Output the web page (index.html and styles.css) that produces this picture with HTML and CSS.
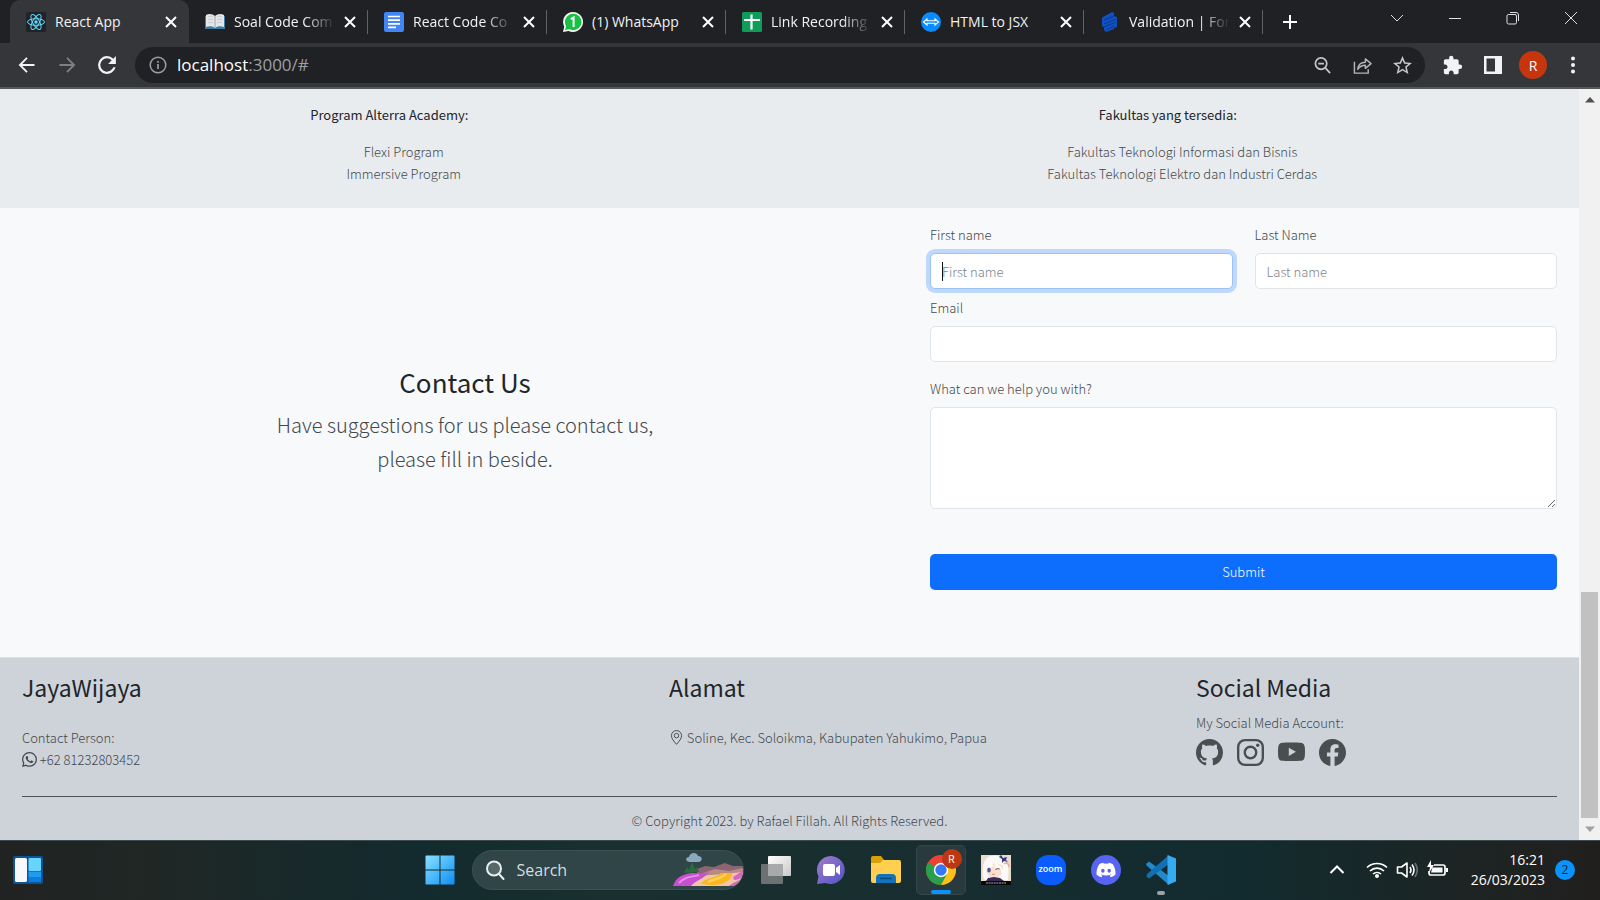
FILE: index.html
```html
<!DOCTYPE html>
<html lang="id">
<head>
<meta charset="utf-8">
<title>React App</title>
<link rel="stylesheet" href="styles.css">
</head>
<body>
<header class="tabstrip">
  <nav class="tabs" aria-label="Tabs">
    <div class="tab tab-active">
      <svg class="favicon" viewBox="0 0 20 20"><rect width="20" height="20" rx="1" fill="#20232a"/><g fill="none" stroke="#61dafb" stroke-width="1"><ellipse cx="10" cy="10" rx="8.5" ry="3.3"/><ellipse cx="10" cy="10" rx="8.5" ry="3.3" transform="rotate(60 10 10)"/><ellipse cx="10" cy="10" rx="8.5" ry="3.3" transform="rotate(120 10 10)"/></g><circle cx="10" cy="10" r="1.7" fill="#61dafb"/></svg>
      <a class="tab-title" href="#">React App</a>
      <button class="tab-close" aria-label="Close tab"><svg viewBox="0 0 12 12"><path d="M1 1l10 10M11 1L1 11"/></svg></button>
    </div>
    <div class="tab">
      <svg class="favicon" viewBox="0 0 20 20"><path d="M0 4h20v13H0z" fill="#3f7ca6"/><path d="M1 3c3-2 7-1 9 1 2-2 6-3 9-1v12c-3-1-7-1-9 1-2-2-6-2-9-1z" fill="#e4e6e8"/><path d="M10 4v12" stroke="#9aa5ad"/><path d="M3 5c2-1 4-1 5 0M3 8c2-1 4-1 5 0M3 11c2-1 4-1 5 0M12 5c2-1 4-1 5 0M12 8c2-1 4-1 5 0M12 11c2-1 4-1 5 0" fill="none" stroke="#c3c9ce"/></svg>
      <a class="tab-title tab-fade" href="#">Soal Code Com</a>
      <button class="tab-close" aria-label="Close tab"><svg viewBox="0 0 12 12"><path d="M1 1l10 10M11 1L1 11"/></svg></button>
    </div>
    <div class="tab">
      <svg class="favicon" viewBox="0 0 20 20"><rect width="20" height="20" rx="2" fill="#4285f4"/><path d="M4 4.5h12M4 8.2h12M4 11.8h12M4 15.4h8" stroke="#fff" stroke-width="1.7"/></svg>
      <a class="tab-title tab-fade" href="#">React Code Co</a>
      <button class="tab-close" aria-label="Close tab"><svg viewBox="0 0 12 12"><path d="M1 1l10 10M11 1L1 11"/></svg></button>
    </div>
    <div class="tab">
      <svg class="favicon" viewBox="0 0 20 20"><path d="M10 0a10 10 0 1 1-4.500 18.900L0 20l1.200-5.300A10 10 0 0 1 10 0z" fill="#f4f4f4"/><circle cx="10.200" cy="10" r="8.300" fill="#16c144"/><path d="M2 18l1.500-5 3.500 4z" fill="#16c144"/><path d="M7.800 7.200l2.800-1.700V15" fill="none" stroke="#fff" stroke-width="2"/></svg>
      <a class="tab-title" href="#">(1) WhatsApp</a>
      <button class="tab-close" aria-label="Close tab"><svg viewBox="0 0 12 12"><path d="M1 1l10 10M11 1L1 11"/></svg></button>
    </div>
    <div class="tab">
      <svg class="favicon" viewBox="0 0 20 20"><rect width="20" height="20" rx="1.500" fill="#0f9d58"/><path d="M2 8h16M9.500 2.500v15" stroke="#fff" stroke-width="2.200"/></svg>
      <a class="tab-title tab-fade" href="#">Link Recording</a>
      <button class="tab-close" aria-label="Close tab"><svg viewBox="0 0 12 12"><path d="M1 1l10 10M11 1L1 11"/></svg></button>
    </div>
    <div class="tab">
      <svg class="favicon" viewBox="0 0 20 20"><circle cx="10" cy="10" r="10" fill="#0a8bff"/><path d="M2.500 10l3.500-3v1.800h8V7l3.500 3-3.500 3v-1.800H6V13z" fill="none" stroke="#fff" stroke-width="1.100"/></svg>
      <a class="tab-title" href="#">HTML to JSX</a>
      <button class="tab-close" aria-label="Close tab"><svg viewBox="0 0 12 12"><path d="M1 1l10 10M11 1L1 11"/></svg></button>
    </div>
    <div class="tab">
      <svg class="favicon" viewBox="0 0 20 20"><path d="M3 5l9-5 2 1v3l3 1v10l-3 1v1l-8 3-2-2v-3l-2-1V6z" fill="#1050c0"/><path d="M4 8l10-4M4 12l12-5M4 15l12-5M6 18l8-4" stroke="#083a94"/></svg>
      <a class="tab-title tab-fade" href="#">Validation | For</a>
      <button class="tab-close" aria-label="Close tab"><svg viewBox="0 0 12 12"><path d="M1 1l10 10M11 1L1 11"/></svg></button>
    </div>
    <button class="new-tab" aria-label="New tab"><svg viewBox="0 0 16 16"><path d="M8 1v14M1 8h14"/></svg></button>
  </nav>
  <div class="window-controls">
    <button aria-label="Search tabs"><svg viewBox="0 0 14 14"><path d="M1 4l6 6 6-6"/></svg></button>
    <button aria-label="Minimize"><svg viewBox="0 0 14 14"><path d="M1 7.500h12"/></svg></button>
    <button aria-label="Restore"><svg viewBox="0 0 14 14"><rect x="1" y="3.500" width="9.500" height="9.500" rx="1.500"/><path d="M4 1.500h6a2.500 2.500 0 0 1 2.500 2.500v6"/></svg></button>
    <button aria-label="Close"><svg viewBox="0 0 14 14"><path d="M1 1l12 12M13 1L1 13"/></svg></button>
  </div>
</header>

<div class="toolbar">
  <button class="tool" aria-label="Back"><svg viewBox="0 0 24 24"><path d="M21 12H4M12 3.500L3.500 12l8.500 8.500" fill="none" stroke="#f1f3f4" stroke-width="2.200"/></svg></button>
  <button class="tool" aria-label="Forward"><svg viewBox="0 0 24 24"><path d="M3 12h17M12 3.500l8.500 8.500-8.500 8.500" fill="none" stroke="#7d7f82" stroke-width="2.200"/></svg></button>
  <button class="tool tool-reload" aria-label="Reload"><svg viewBox="3 3 18 18"><path fill="#f1f3f4" d="M17.650 6.350A7.960 7.960 0 0 0 12 4a8 8 0 1 0 7.730 10h-2.080A6 6 0 1 1 12 6c1.660 0 3.140.690 4.220 1.780L13 11h7V4l-2.350 2.350z"/></svg></button>
  <div class="omnibox">
    <svg class="omni-icon" viewBox="0 0 18 18"><circle cx="9" cy="9" r="7.800" fill="none" stroke="#9aa0a6" stroke-width="1.500"/><path d="M9 8v5M9 5v1.700" stroke="#9aa0a6" stroke-width="1.700"/></svg>
    <span class="url"><b>localhost</b>:3000/#</span>
    <button class="omni-btn" aria-label="Zoom out"><svg viewBox="0 0 20 20"><g fill="none" stroke="#c4c7ca" stroke-width="1.800"><circle cx="8.500" cy="8" r="6"/><path d="M13 12.500l5 5.500M5.500 8h6"/></g></svg></button>
    <button class="omni-btn" aria-label="Share"><svg viewBox="0 0 20 20"><g fill="none" stroke="#b4b7ba" stroke-width="1.500"><path d="M1.500 6v12H16v-4"/><path d="M5 14c.5-5 3-7.500 8-7.500V3l6 5-6 5V9.800c-4 0-6 1.500-8 4.200z" stroke-linejoin="round"/></g></svg></button>
    <button class="omni-btn" aria-label="Bookmark"><svg viewBox="2 2 20 20"><path fill="#c4c7ca" d="M22 9.240l-7.190-.620L12 2 9.190 8.630 2 9.240l5.460 4.730L5.820 21 12 17.270 18.180 21l-1.630-7.030L22 9.240zM12 15.400l-3.760 2.270 1-4.280-3.320-2.880 4.380-.380L12 6.100l1.710 4.040 4.380.380-3.320 2.880 1 4.280L12 15.400z"/></svg></button>
  </div>
  <div class="tool-right">
    <button aria-label="Extensions"><svg viewBox="1 0 23 23"><path fill="#f1f3f4" d="M20.500 11H19V7c0-1.100-.9-2-2-2h-4V3.500a2.500 2.500 0 0 0-5 0V5H4c-1.100 0-1.990.9-1.990 2v3.800H3.500c1.490 0 2.700 1.210 2.700 2.700s-1.210 2.700-2.700 2.700H2V20c0 1.100.9 2 2 2h3.800v-1.500c0-1.490 1.210-2.700 2.700-2.700s2.700 1.210 2.700 2.700V22H17c1.100 0 2-.9 2-2v-4h1.500a2.500 2.500 0 0 0 0-5z"/></svg></button>
    <button aria-label="Side panel"><svg viewBox="0 0 20 20"><path fill="#f1f3f4" fill-rule="evenodd" d="M1 1h18v18H1zM3.500 3.500v13H12v-13z"/></svg></button>
    <button class="avatar" aria-label="Profile">R</button>
    <button aria-label="Menu"><svg viewBox="0 0 20 20" fill="#f1f3f4"><circle cx="10" cy="3.500" r="2"/><circle cx="10" cy="10" r="2"/><circle cx="10" cy="16.500" r="2"/></svg></button>
  </div>
</div>

<div class="viewport">
  <main class="page">
    <section class="programs">
      <div class="program-col">
        <h2>Program Alterra Academy:</h2>
        <ul><li>Flexi Program</li><li>Immersive Program</li></ul>
      </div>
      <div class="program-col">
        <h2>Fakultas yang tersedia:</h2>
        <ul><li>Fakultas Teknologi Informasi dan Bisnis</li><li>Fakultas Teknologi Elektro dan Industri Cerdas</li></ul>
      </div>
    </section>

    <section class="contact">
      <div class="contact-intro">
        <h1>Contact Us</h1>
        <p>Have suggestions for us please contact us,<br>please fill in beside.</p>
      </div>
      <form class="contact-form">
        <div class="name-row">
          <div class="field">
            <label for="first">First name</label>
            <div class="input-wrap"><input class="control control-focus" id="first" type="text" placeholder="First name"><span class="caret"></span></div>
          </div>
          <div class="field">
            <label for="last">Last Name</label>
            <input class="control" id="last" type="text" placeholder="Last name">
          </div>
        </div>
        <div class="field field-email">
          <label for="email">Email</label>
          <input class="control" id="email" type="email">
        </div>
        <div class="field field-message">
          <label for="message">What can we help you with?</label>
          <textarea class="control" id="message"></textarea>
        </div>
        <button class="submit" type="submit">Submit</button>
      </form>
    </section>

    <footer class="footer">
      <div class="footer-cols">
        <div class="footer-col">
          <h3>JayaWijaya</h3>
          <p class="footer-text">Contact Person:<br><svg class="bi" viewBox="0 0 16 16"><path d="M13.601 2.326A7.850 7.850 0 0 0 7.994 0C3.627 0 .068 3.558.064 7.926c0 1.399.366 2.760 1.057 3.965L0 16l4.204-1.102a7.900 7.900 0 0 0 3.790.965h.004c4.368 0 7.926-3.558 7.930-7.930A7.900 7.900 0 0 0 13.600 2.326zM7.994 14.521a6.600 6.600 0 0 1-3.356-.920l-.240-.144-2.494.654.666-2.433-.156-.251a6.560 6.560 0 0 1-1.007-3.505c0-3.626 2.957-6.584 6.591-6.584a6.560 6.560 0 0 1 4.660 1.931 6.560 6.560 0 0 1 1.928 4.660c-.004 3.639-2.961 6.592-6.592 6.592m3.615-4.934c-.197-.099-1.170-.578-1.353-.646-.182-.065-.315-.099-.445.099-.133.197-.513.646-.627.775-.114.133-.232.148-.430.050-.197-.100-.836-.308-1.592-.985-.590-.525-.985-1.175-1.103-1.372-.114-.198-.011-.304.088-.403.087-.088.197-.232.296-.346.100-.114.133-.198.198-.330.065-.134.034-.248-.015-.347-.050-.099-.445-1.076-.612-1.470-.160-.389-.323-.335-.445-.340-.114-.007-.247-.007-.380-.007a.730.730 0 0 0-.529.247c-.182.198-.691.677-.691 1.654s.710 1.916.810 2.049c.098.133 1.394 2.132 3.383 2.992.470.205.840.326 1.129.418.475.152.904.129 1.246.080.380-.058 1.171-.480 1.338-.943.164-.464.164-.860.114-.992-.049-.133-.182-.198-.380-.297z"/></svg> +62 81232803452</p>
        </div>
        <div class="footer-col">
          <h3>Alamat</h3>
          <p class="footer-text"><svg class="bi" viewBox="0 0 16 16"><path d="M8 15.300C5 12 2.600 9 2.600 6a5.400 5.400 0 0 1 10.800 0c0 3-2.400 6-5.400 9.300z" fill="none" stroke="currentColor"/><circle cx="8" cy="6" r="2.400" fill="none" stroke="currentColor"/></svg> Soline, Kec. Soloikma, Kabupaten Yahukimo, Papua</p>
        </div>
        <div class="footer-col">
          <h3>Social Media</h3>
          <p class="footer-lead">My Social Media Account:</p>
          <div class="social">
            <a href="#" aria-label="GitHub"><svg viewBox="0 0 16 16"><path d="M8 0C3.580 0 0 3.580 0 8c0 3.540 2.290 6.530 5.470 7.590.400.070.550-.170.550-.380 0-.190-.010-.820-.010-1.490-2.010.370-2.530-.490-2.690-.940-.090-.230-.480-.940-.820-1.130-.280-.150-.680-.520-.010-.530.630-.010 1.080.580 1.230.820.720 1.210 1.870.870 2.330.660.070-.520.280-.870.510-1.070-1.780-.200-3.640-.890-3.640-3.950 0-.870.310-1.590.820-2.150-.080-.200-.360-1.020.080-2.120 0 0 .670-.210 2.200.820.640-.180 1.320-.270 2-.270s1.360.090 2 .270c1.530-1.040 2.200-.820 2.200-.820.440 1.100.160 1.920.080 2.120.510.560.820 1.270.820 2.150 0 3.070-1.870 3.750-3.650 3.950.290.250.540.730.540 1.480 0 1.070-.010 1.930-.010 2.200 0 .210.150.460.550.380A8.010 8.010 0 0 0 16 8c0-4.420-3.580-8-8-8"/></svg></a>
            <a href="#" aria-label="Instagram"><svg viewBox="0 0 16 16"><rect x=".7" y=".7" width="14.600" height="14.600" rx="4" fill="none" stroke="currentColor" stroke-width="1.400"/><circle cx="8" cy="8" r="3.400" fill="none" stroke="currentColor" stroke-width="1.400"/><circle cx="12.300" cy="3.700" r="1"/></svg></a>
            <a href="#" aria-label="YouTube"><svg viewBox="0 0 16 16"><path fill-rule="evenodd" d="M2.500 2.200C4 2 12 2 13.500 2.200 15.200 2.400 15.700 3.400 15.900 5c.15 1.800.15 3.300 0 5-.2 1.800-.7 2.700-2.400 2.900-1.500.2-9.500.2-11 0C.8 12.700.3 11.800.1 10c-.15-1.700-.15-3.200 0-5C.3 3.400.8 2.400 2.500 2.200zM6.400 5.200v4.800l4.200-2.400z"/></svg></a>
            <a href="#" aria-label="Facebook"><svg viewBox="0 0 16 16"><path d="M16 8.049c0-4.446-3.582-8.050-8-8.050C3.580 0-.002 3.603-.002 8.050c0 4.017 2.926 7.347 6.750 7.951v-5.625h-2.030V8.050H6.750V6.275c0-2.017 1.195-3.131 3.022-3.131.876 0 1.791.157 1.791.157v1.980h-1.009c-.993 0-1.303.621-1.303 1.258v1.510h2.218l-.354 2.326H9.250V16c3.824-.604 6.750-3.934 6.750-7.951"/></svg></a>
          </div>
        </div>
      </div>
      <p class="copyright">© Copyright 2023. by Rafael Fillah. All Rights Reserved.</p>
    </footer>
  </main>
  <div class="scrollbar">
    <svg class="scroll-arrow" viewBox="0 0 10 6"><path d="M0 5.500L5 0l5 5.500z" fill="#505050"/></svg>
    <div class="scroll-track"><div class="scroll-thumb"></div></div>
    <svg class="scroll-arrow" viewBox="0 0 10 6"><path d="M0 .5L5 6l5-5.500z" fill="#a0a0a0"/></svg>
  </div>
</div>

<div class="taskbar">
  <button class="widgets" aria-label="Widgets"><svg viewBox="0 0 30 28"><rect width="30" height="28" rx="2" fill="#0c5496"/><rect x="2" y="2" width="12" height="24" rx="1.500" fill="#f7f8fc"/><rect x="15.500" y="2" width="12.500" height="13" rx="1" fill="#67d4fb"/><path d="M15.500 15.500H28V21H15.500z" fill="#1f9bf0"/><path d="M15.500 21H28v5H15.500z" fill="#0a7de0"/></svg></button>
  <div class="apps">
    <button class="app" aria-label="Start"><svg viewBox="0 0 30 30"><defs><linearGradient id="win" gradientUnits="userSpaceOnUse" x1="0" y1="0" x2="30" y2="30"><stop stop-color="#8be3ff"/><stop offset="1" stop-color="#0a8df5"/></linearGradient></defs><path fill="url(#win)" d="M1 .5h13.500v14H.5V1zM15.500.5H29l.5.5v13.500h-14zM.5 15.500h14v14H1l-.5-.5zM15.500 15.500h14V29l-.5.5H15.500z"/></svg></button>
    <button class="search">
      <svg class="search-icon" viewBox="0 0 20 20"><g fill="none" stroke="#e8eeee" stroke-width="2" stroke-linecap="round"><circle cx="9" cy="8.500" r="7" fill="#56676a"/><path d="M14 14l4.500 5"/></g></svg>
      <span>Search</span>
      <svg class="search-art" viewBox="0 0 70 34"><path d="M24 16l8-3 9 1 11-4 8 3h10v12H24z" fill="#8d6572"/><path d="M30 20l12-4 14 2 14-3v14H30z" fill="#b78a86"/><path d="M14 33c4-6 14-11 24-11l14-1 18-2v6c-3 5-8 8-12 8z" fill="#efc7a4"/><path d="M0 33c3-9 10-12 19-13 6 0 11 1 17-1-5 7-13 8-18 14z" fill="#c84fd0"/><path d="M6 30c5-6 12-6 20-8" fill="none" stroke="#e58be8" stroke-width="2"/><path d="M28 31c4-7 14-5 20-11l11 0c1 6-8 12-20 12z" fill="#ffb51c"/><path d="M35 29c6-3 13-3 18-8" fill="none" stroke="#ffd667" stroke-width="2"/><path d="M60 24c3-2 6-4 10-6v6c-3 2-6 3-9 3zM56 33c4-4 8-4 12-7-1 4-5 7-9 7z" fill="#d765c8"/><path d="M11 20l3-6 2 3 3-8 3 7 2-2 2 5z" fill="#2d6a40"/><path d="M17 9c-5 0-5-5-1-5 1-5 8-5 9-1 5 0 5 6 0 6z" fill="#8ba9bd"/></svg>
    </button>
    <button class="app" aria-label="Task view"><svg viewBox="0 0 30 30"><defs><linearGradient id="tv" x2="1" y2="1"><stop stop-color="#fff"/><stop offset="1" stop-color="#c8c8c8"/></linearGradient></defs><rect x="7" y="1" width="23" height="20" rx="1" fill="url(#tv)"/><rect y="9" width="22" height="20" rx="1" fill="#6c7172"/><path d="M7 9h15v12H7z" fill="#a7a9aa"/></svg></button>
    <button class="app" aria-label="Chat"><svg viewBox="0 0 30 30"><defs><linearGradient id="ch" x2="1" y2="1"><stop stop-color="#a37cc9"/><stop offset="1" stop-color="#5053c6"/></linearGradient></defs><path d="M15 1a14 14 0 1 1-5.500 27L1 29l1.500-7.500A14 14 0 0 1 15 1z" fill="url(#ch)"/><rect x="7" y="9" width="12" height="12" rx="2" fill="#fff"/><path d="M20 13l4-3v10l-4-3z" fill="#fff"/></svg></button>
    <button class="app" aria-label="File Explorer"><svg viewBox="0 0 30 30"><path d="M0 3q0-2 2-2h8l3 4-3 4H0z" fill="#d9a009"/><path d="M0 8h9l3-3h16q2 0 2 2v19q0 2-2 2H2q-2 0-2-2z" fill="#ffd04f"/><path d="M5 28v-5q0-4 4-4h12q4 0 4 4v5z" fill="#0f74bd"/><path d="M9 23.500h12" stroke="#074c7c" stroke-width="1.500"/></svg></button>
    <button class="app app-active" aria-label="Chrome"><svg viewBox="0 0 30 30"><circle cx="15" cy="15" r="15" fill="#ea4335"/><path d="M15 15L2 7.500A15 15 0 0 0 15 30l6.500-11z" fill="#28a04b"/><path d="M15 8h13.300A15 15 0 0 1 15 30l6-11z" fill="#fbc116"/><circle cx="15" cy="15" r="7.200" fill="#fff"/><circle cx="15" cy="15" r="5.700" fill="#3478f6"/></svg><span class="app-badge">R</span></button>
    <button class="app" aria-label="Genshin Impact"><svg viewBox="0 0 30 30"><path fill="#e9dccb" d="M0 0h30v30H0z"/><path d="M2 14C2 3 9-1 17 1c9 2 12 9 10 24H4C1 22 2 18 2 14z" fill="#fbf9f7"/><path d="M5 12c4-4 13-5 17-1v6c-2 5-8 6-10 6-4 0-7-4-7-11z" fill="#fadfce"/><path d="M3 15c3-2 4-6 8-9-1 3 1 5 4 6l-1-4c4 1 7 4 8 8l2-3c2 5 0 9-2 12-1-3-1-9-3-12-2 1-5 0-7-2-3 2-6 4-9 4z" fill="#fff"/><ellipse cx="8" cy="15" rx="1.800" ry="2.600" fill="#4a5896"/><path d="M14.500 14.500q2-1.500 4-.5" stroke="#614b58" fill="none"/><path d="M11 19q1.500 1 3 0" stroke="#c0706c" fill="none" stroke-width=".8"/><path d="M20 0l2 3 4-1-1 3 2 2-4-1-2 2v-4l-3-2z" fill="#343a85"/><path d="M7 23l6-1 6 1 4 3H5z" fill="#3a2c5a"/><path d="M23 9c2-2 5-1 5 3" fill="none" stroke="#dfaea0" stroke-width="1.500"/><path d="M0 26h30v4H0z" fill="#080808"/><path d="M5 28h20" stroke="#aaa" stroke-width="1.200" stroke-dasharray="2 .6"/></svg></button>
    <button class="app app-zoom" aria-label="Zoom"><span>zoom</span></button>
    <button class="app" aria-label="Discord"><svg viewBox="0 0 30 30"><circle cx="15" cy="15" r="15" fill="#5865f2"/><g transform="translate(5.500 5.500) scale(1.190)"><path fill="#fff" d="M13.545 2.907a13.200 13.200 0 0 0-3.257-1.011.050.050 0 0 0-.052.025c-.141.250-.297.577-.406.833a12.200 12.200 0 0 0-3.658 0 8 8 0 0 0-.412-.833.050.050 0 0 0-.052-.025c-1.125.194-2.220.534-3.257 1.011C.356 6.024-.213 9.047.066 12.032a13.300 13.300 0 0 0 4.016 2.057q.500-.650.874-1.348a9 9 0 0 1-1.276-.665l.263-.280c2.670 1.203 5.505 1.203 8.092 0l.300.202a8 8 0 0 1-1.279.685q.370.720.850 1.399a13.200 13.200 0 0 0 4.022-2.057c.334-3.451-.559-6.449-2.383-9.118m-8.198 7.307c-.789 0-1.438-.724-1.438-1.612s.637-1.613 1.438-1.613c.807 0 1.450.730 1.438 1.613 0 .888-.637 1.612-1.438 1.612m5.316 0c-.788 0-1.438-.724-1.438-1.612s.637-1.613 1.438-1.613c.807 0 1.451.730 1.438 1.613 0 .888-.631 1.612-1.438 1.612"/></g></svg></button>
    <button class="app app-running" aria-label="Visual Studio Code"><svg viewBox="0 0 30 30"><path d="M0 9l3-2.500L23 21v9L1 11z" fill="#2489ca"/><path d="M1 19L23 0v9L3 23.500.5 21.500z" fill="#1070b3"/><path d="M21.500 0L30 3.500v23L21.500 30z" fill="#35abf1"/></svg></button>
  </div>
  <div class="tray">
    <button aria-label="Show hidden icons"><svg viewBox="0 0 22 22"><path d="M4.500 14l6.500-6.500 6.500 6.500" fill="none" stroke="#fff" stroke-width="2"/></svg></button>
    <button class="tray-status" aria-label="Network, volume and battery">
      <svg viewBox="0 0 22 22"><g fill="none" stroke="#fff" stroke-width="1.600"><path d="M1 8.500a14.500 14.500 0 0 1 20 0M4 12a10 10 0 0 1 14 0M7 15a6 6 0 0 1 8 0"/></g><circle cx="11" cy="17" r="2" fill="#fff"/></svg>
      <svg viewBox="0 0 22 22"><g fill="none" stroke="#fff" stroke-width="1.600" stroke-linejoin="round"><path d="M1.500 8h4L11 4v14l-5.500-4h-4zM14 8q2 3 0 6M16 5.500q4 5.500 0 11"/><path d="M19 4q4.500 7 0 14" stroke="#657073"/></g></svg>
      <svg viewBox="0 0 22 22"><path d="M8 6h9q2 0 2 2v6q0 2-2 2H5q-2 0-2-2v-2" fill="none" stroke="#fff" stroke-width="1.700"/><path d="M6.500 8.500h10v5H5zM20 9h2v4h-2zM5 1L1 8h3l-1 6 5-8H5z" fill="#fff"/></svg>
    </button>
    <button class="clock"><span>16:21</span><span>26/03/2023</span></button>
    <button class="notice" aria-label="Notifications">2</button>
  </div>
</div>
</body>
</html>
```

FILE: styles.css
```css
* { box-sizing: border-box; }

body {
  margin: 0;
  height: 100vh;
  display: flex;
  flex-direction: column;
  overflow: hidden;
  font-family: "Open Sans", "Noto Sans", sans-serif;
}

button {
  padding: 0;
  border: 0;
  background: none;
  color: inherit;
  font: inherit;
}

svg { display: block; }

/* Tab strip */
.tabstrip {
  display: flex;
  justify-content: space-between;
  height: 43px;
  flex: none;
  background: #202124;
  color: #f1f3f4;
}
.tabs {
  display: flex;
  align-items: center;
  flex: 0 1 1317px;
  min-width: 0;
  padding-left: 10px;
}
.tab {
  display: flex;
  align-items: center;
  flex: 1 1 179px;
  min-width: 0;
  height: 43px;
  gap: 9px;
  padding: 0 12px 0 16px;
  background: linear-gradient(#5f6368, #5f6368) right center / 1px 24px no-repeat;
}
.tab-active {
  background: #35363a;
  border-radius: 10px 10px 0 0;
}
.favicon { flex: none; width: 20px; height: 20px; }
.tab-title {
  flex: 1;
  min-width: 0;
  overflow: hidden;
  white-space: nowrap;
  color: inherit;
  text-decoration: none;
  font-size: 14px;
  line-height: 20px;
}
.tab-fade {
  -webkit-mask-image: linear-gradient(90deg, #000 70%, transparent);
  mask-image: linear-gradient(90deg, #000 70%, transparent);
}
.tab-close {
  display: grid;
  place-items: center;
  flex: none;
  width: 12px;
  height: 20px;
}
.tab-close svg { width: 12px; height: 12px; }
.tab-close path { stroke: #fff; stroke-width: 2; }
.new-tab {
  display: grid;
  place-items: center;
  flex: none;
  width: 54px;
  height: 43px;
}
.new-tab svg { width: 16px; height: 16px; stroke: #fff; stroke-width: 2; }
.window-controls { display: flex; flex: none; height: 36px; }
.window-controls button {
  display: grid;
  place-items: center;
  width: 58px;
}
.window-controls svg {
  width: 14px;
  height: 14px;
  fill: none;
  stroke: #e0e0e0;
}

/* Toolbar */
.toolbar {
  display: flex;
  align-items: center;
  flex: none;
  height: 46px;
  padding: 0 13px 0 7px;
  background: #35363a;
  border-bottom: 2px solid #55565a;
}
.tool {
  display: grid;
  place-items: center;
  flex: none;
  width: 40px;
}
.tool svg { width: 20px; height: 20px; }
.omnibox {
  display: flex;
  align-items: center;
  flex: 1;
  min-width: 0;
  height: 36px;
  margin-left: 8px;
  padding: 0 3px 0 14px;
  border-radius: 18px;
  background: #202124;
}
.omni-icon { width: 18px; height: 18px; margin-right: 10px; }
.url {
  flex: 1;
  color: #9aa0a6;
  font-size: 17px;
  line-height: 24px;
}
.url b { color: #fff; font-weight: 400; }
.omni-btn {
  display: grid;
  place-items: center;
  width: 40px;
}
.omni-btn svg { width: 19px; height: 19px; }
.tool-right {
  display: flex;
  align-items: center;
  gap: 12px;
  margin-left: 14px;
}
.tool-right button {
  display: grid;
  place-items: center;
  width: 28px;
  height: 28px;
}
.tool-right svg { width: 20px; height: 20px; }
.tool-right .avatar {
  border-radius: 50%;
  background: #c5360f;
  color: #fff;
  font-size: 14px;
}

/* Web page */
.viewport { display: flex; flex: 1; min-height: 0; }
.page {
  display: flex;
  flex-direction: column;
  flex: 1;
  min-width: 0;
  color: #43484d;
  background: #f8f9fb;
  font-family: "Noto Sans CJK JP", "Noto Sans CJK SC", sans-serif;
  font-size: 13px;
  font-weight: 300;
  line-height: 22px;
}
.page h1, .page h2, .page h3, .page p, .page ul { margin: 0; }
.page h1, .page h2, .page h3 { color: #212529; font-weight: 400; }

.programs {
  display: grid;
  grid-template-columns: 1fr 1fr;
  padding: 15px 22px 23px 0;
  background: #e9ecef;
  text-align: center;
}
.programs h2 {
  margin-bottom: 15px;
  font-size: 13px;
  line-height: 22px;
}
.programs ul { padding-left: 29px; list-style: none; }

.contact {
  display: grid;
  grid-template-columns: 930fr 649fr;
  flex: 1;
}
.contact-intro { align-self: center; text-align: center; padding-bottom: 26px; }
.contact-intro h1 {
  margin-bottom: 8px;
  font-size: 26px;
  line-height: 36px;
}
.contact-intro p { font-size: 20px; line-height: 34px; }

.contact-form { padding: 16px 22px 0 0; }
.name-row {
  display: grid;
  grid-template-columns: 1fr 1fr;
  gap: 22px;
}
.field label { display: block; margin-bottom: 7px; }
.control {
  display: block;
  width: 100%;
  height: 36px;
  padding: 5px 11px;
  border: 1px solid #e1e4e8;
  border-radius: 5px;
  background: #fff;
  color: #212529;
  font: inherit;
}
.control::placeholder { color: #7c858d; }
.control-focus {
  border-color: #9ac3fe;
  box-shadow: 0 0 0 4px #bfd8fb;
}
.input-wrap { position: relative; }
.caret {
  position: absolute;
  left: 12px;
  top: 9px;
  width: 1px;
  height: 19px;
  background: #111;
}
.field-email { margin-top: 8px; }
.field-message { margin-top: 16px; }
textarea.control { height: 102px; }
.submit {
  display: block;
  width: 100%;
  height: 36px;
  margin-top: 45px;
  border-radius: 5px;
  background: #0d6efd;
  color: #fff;
}

.footer {
  padding: 11px 22px 8px;
  background: #ced3da;
  border-top: 1px solid #dde1e6;
}
.footer-cols {
  display: grid;
  grid-template-columns: 647fr 527fr 361fr;
  padding-bottom: 25px;
  border-bottom: 1px solid #4d555c;
}
.footer h3 {
  font-size: 23px;
  line-height: 36px;
}
.footer-text { padding-top: 22px; }
.bi {
  display: inline-block;
  width: 15px;
  height: 15px;
  fill: currentColor;
  vertical-align: -2px;
}
.footer-lead { padding-top: 7px; }
.social { display: flex; gap: 14px; padding-top: 5px; }
.social a { color: #4a4e51; }
.social svg { width: 27px; height: 27px; fill: currentColor; }
.copyright { padding-top: 13px; text-align: center; }

.scrollbar {
  display: flex;
  flex-direction: column;
  align-items: center;
  flex: none;
  width: 21px;
  padding: 8px 2px;
  gap: 8px;
  background: #f1f1f1;
}
.scroll-arrow { width: 10px; height: 6px; flex: none; }
.scroll-track {
  display: flex;
  align-items: flex-end;
  flex: 1;
  width: 100%;
}
.scroll-thumb { width: 100%; height: 32%; background: #c1c1c1; }

/* Taskbar */
.taskbar {
  display: grid;
  grid-template-columns: 1fr auto 1fr;
  align-items: center;
  flex: none;
  height: 60px;
  box-shadow: inset 0 1px #3b4a4c;
  background: linear-gradient(90deg, #212322 0%, #1f2725 10%, #132a2e 25%, #19302f 38%, #172d30 60%, #122b2f 78%, #1d2423 92%, #211f1e 100%);
  color: #fff;
}
.widgets { justify-self: start; margin-left: 13px; }
.widgets svg { width: 30px; height: 28px; }
.apps { display: flex; align-items: center; gap: 5px; }
.app {
  position: relative;
  display: grid;
  place-items: center;
  width: 50px;
  height: 50px;
  border-radius: 5px;
}
.app svg { width: 30px; height: 30px; }
.app-active { background: #293a3e; border: 1px solid #34464a; }
.app-active::after, .app-running::after {
  content: "";
  position: absolute;
  bottom: 0;
  width: 20px;
  height: 4px;
  border-radius: 2px;
  background: #0a93ff;
}
.app-running::after { width: 8px; background: #9aa3a5; }
.app-badge {
  position: absolute;
  top: 3px;
  right: 3px;
  width: 20px;
  height: 20px;
  border-radius: 50%;
  background: #bd3713;
  font-size: 11px;
  line-height: 20px;
}
.app-zoom span {
  width: 30px;
  height: 30px;
  border-radius: 12px;
  background: #0b5cff;
  font-size: 9px;
  font-weight: 600;
  line-height: 28px;
}
.search {
  display: flex;
  align-items: center;
  gap: 12px;
  width: 272px;
  height: 40px;
  margin: 0 2px;
  padding-left: 12px;
  overflow: hidden;
  border: 1px solid #3b5052;
  border-radius: 20px;
  background: #304548;
  color: #d7dcdd;
  font-size: 16px;
}
.search-icon { width: 20px; height: 20px; }
.search-art { width: 70px; height: 34px; margin-left: auto; }
.tray {
  display: flex;
  align-items: center;
  justify-self: end;
  padding-right: 25px;
}
.tray svg { width: 22px; height: 22px; }
.tray-status { display: flex; gap: 8px; margin: 0 23px 0 18px; }
.clock {
  display: flex;
  flex-direction: column;
  align-items: flex-end;
  font-size: 14px;
  line-height: 20px;
}
.notice {
  width: 20px;
  height: 20px;
  margin-left: 10px;
  border-radius: 50%;
  background: #0a93ff;
  color: #10232c;
  font-size: 12px;
  line-height: 20px;
}
```
